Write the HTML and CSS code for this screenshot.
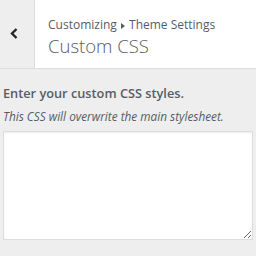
FILE: index.html
```html
<!DOCTYPE html>
<html lang="en">

<head>
    <meta charset="UTF-8">
    <title>Custom CSS</title>
    <link rel="stylesheet" href="styles.css">
</head>

<body>
    <div class="Panel">
        <div class="Head">
            <button class="BackBtn">
                <svg width="8" height="11" viewBox="0 0 8 11">
                    <path d="M6.5 1 L2 5.5 L6.5 10" fill="none" stroke="#23282d" stroke-width="2.4" />
                </svg>
            </button>
            <div class="Title">
                <div class="Crumb">Customizing <span class="Arrow"></span> Theme Settings</div>
                <h1>Custom CSS</h1>
            </div>
        </div>
        <div class="Body">
            <label class="Label">Enter your custom CSS styles.</label>
            <p class="Desc">This CSS will overwrite the main stylesheet.</p>
            <textarea class="Css"></textarea>
        </div>
    </div>
</body>

</html>
```

FILE: styles.css
```css
body {
    margin: 0;
    background-color: #eeeeee;
    font-family: "Open Sans", "Noto Sans", sans-serif;
    color: #555d66;
}

.Head {
    display: flex;
    height: 68px;
    background-color: white;
    border-bottom: 1px solid #dddddd;
}

.BackBtn {
    width: 35px;
    border: none;
    border-right: 1px solid #dddddd;
    background-color: #eeeeee;
    display: flex;
    align-items: center;
    padding: 0 0 0 10px;
    margin-top: -2px;
}

.Title {
    padding: 16px 0 0 13px;
}

.Crumb {
    font-size: 12px;
    line-height: 18px;
}

.Arrow {
    display: inline-block;
    width: 0;
    height: 0;
    border-top: 3.5px solid transparent;
    border-bottom: 3.5px solid transparent;
    border-left: 4px solid #555d66;
    margin: 0 1px;
}

.Title h1 {
    margin: 0;
    font-size: 18.5px;
    font-weight: 300;
    line-height: 24px;
}

.Body {
    padding: 15px 3px 0 3px;
}

.Label {
    display: block;
    font-size: 12.75px;
    font-weight: 600;
    line-height: 18px;
}

.Desc {
    margin: 6px 0 0;
    font-size: 11.8px;
    font-style: italic;
    line-height: 16px;
}

.Css {
    display: block;
    box-sizing: border-box;
    width: 100%;
    height: 109px;
    margin-top: 7px;
    border: 1px solid #dddddd;
    box-shadow: inset 0 1px 2px rgba(0, 0, 0, 0.07);
    resize: vertical;
}
```
